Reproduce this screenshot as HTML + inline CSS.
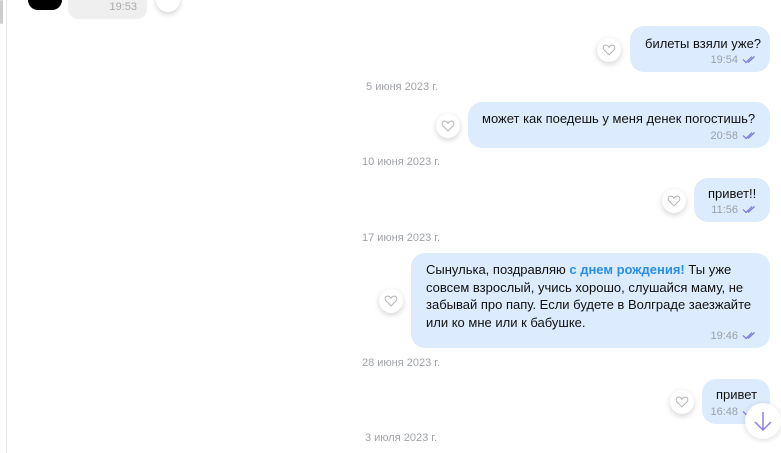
<!DOCTYPE html>
<html><head><meta charset="utf-8"><style>
body{margin:0;width:781px;height:453px;overflow:hidden;background:#fff;font-family:"Liberation Sans","DejaVu Sans",sans-serif;position:relative}
.a{position:absolute}
.b{position:absolute;background:#dcebfd;border-radius:14px;color:#111;font-size:13px;box-sizing:border-box}
.t{position:absolute;right:32px;bottom:6px;font-size:11px;color:#9aa0a8}
.ck{position:absolute;right:12px;bottom:8px}
.h{position:absolute;width:24px;height:24px;border-radius:50%;background:#fff;box-shadow:0 2px 6px rgba(0,0,0,.18)}
.h svg{position:absolute;left:5px;top:6px}
.d{position:absolute;font-size:11px;color:#a0a3a8;width:200px;text-align:center}
</style></head><body>
<div class="a" style="left:0;top:0;width:3px;height:24px;background:#ccc;border-radius:2px"></div>
<div class="a" style="left:6px;top:0;width:1px;height:453px;background:#e3e8ef"></div>
<div class="a" style="left:28px;top:-10px;width:34px;height:20px;background:#000;border-radius:10px"></div>
<div class="a" style="left:68px;top:-10px;width:79px;height:29px;background:#efefef;border-radius:10px"><span style="position:absolute;right:10px;bottom:6px;font-size:11px;color:#aaa">19:53</span></div>
<div class="h" style="left:156px;top:-12px"></div>

<svg width="0" height="0" style="position:absolute"><defs>
<symbol id="hr" viewBox="0 0 12 11"><path d="M6 10 L1.5 5.5 C0 4 0.5 1 3 1 C4.5 1 5.5 2 6 3 C6.5 2 7.5 1 9 1 C11.5 1 12 4 10.5 5.5 Z" fill="none" stroke="#b5b5b5" stroke-width="0.9"/></symbol>
<symbol id="ck" viewBox="0 0 16 9"><path d="M1 4.5 L4 7.5 L10 1.5 M6 7.5 L12.5 1.5" fill="none" stroke="#7b72e0" stroke-width="1.2"/></symbol>
</defs></svg>

<div class="b" style="left:630px;top:26px;width:140px;height:46px"><span class="a" style="left:15px;top:10px">билеты взяли уже?</span><span class="t">19:54</span><svg class="ck" width="16" height="9"><use href="#ck"/></svg></div>
<div class="h" style="left:597px;top:38px"><svg width="14" height="12"><use href="#hr"/></svg></div>
<div class="d" style="left:302px;top:81px">5 июня 2023 г.</div>

<div class="b" style="left:468px;top:102px;width:302px;height:46px"><span class="a" style="left:14px;top:9px">может как поедешь у меня денек погостишь?</span><span class="t">20:58</span><svg class="ck" width="16" height="9"><use href="#ck"/></svg></div>
<div class="h" style="left:436px;top:114px"><svg width="14" height="12"><use href="#hr"/></svg></div>
<div class="d" style="left:301px;top:156px">10 июня 2023 г.</div>

<div class="b" style="left:694px;top:178px;width:76px;height:44px"><span class="a" style="left:14px;top:8px">привет!!</span><span class="t">11:56</span><svg class="ck" width="16" height="9"><use href="#ck"/></svg></div>
<div class="h" style="left:662px;top:189px"><svg width="14" height="12"><use href="#hr"/></svg></div>
<div class="d" style="left:301px;top:232px">17 июня 2023 г.</div>

<div class="b" style="left:411px;top:253px;width:359px;height:95px"><div class="a" style="left:15px;top:8px;width:335px;line-height:17.5px">Сынулька, поздравляю <b style="color:#2a8fe6">с днем рождения!</b> Ты уже совсем взрослый, учись хорошо, слушайся маму, не забывай про папу. Если будете в Волграде заезжайте или ко мне или к бабушке.</div><span class="t">19:46</span><svg class="ck" width="16" height="9"><use href="#ck"/></svg></div>
<div class="h" style="left:379px;top:289px"><svg width="14" height="12"><use href="#hr"/></svg></div>
<div class="d" style="left:301px;top:357px">28 июня 2023 г.</div>

<div class="b" style="left:702px;top:379px;width:68px;height:45px"><span class="a" style="left:14px;top:8px">привет</span><span class="t">16:48</span><svg class="ck" width="16" height="9"><use href="#ck"/></svg></div>
<div class="h" style="left:670px;top:390px"><svg width="14" height="12"><use href="#hr"/></svg></div>
<div class="d" style="left:301px;top:432px">3 июля 2023 г.</div>

<div class="a" style="left:745px;top:403px;width:36px;height:36px;border-radius:50%;background:#fff;box-shadow:0 1px 6px rgba(0,0,0,.15)"><svg width="36" height="36" style="position:absolute;left:0;top:0"><path d="M18 9 V27 M10 19 L18 27 L26 19" fill="none" stroke="#8a7fe6" stroke-width="1.5"/></svg></div>
</body></html>
